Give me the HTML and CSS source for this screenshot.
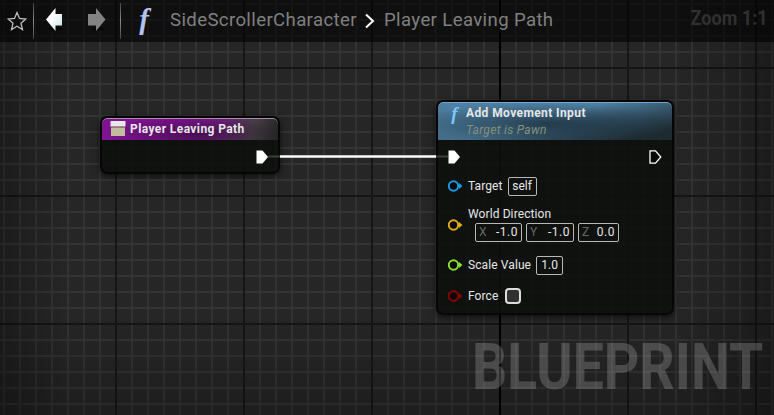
FILE: index.html
```
<!DOCTYPE html>
<html lang="en">
<head>
<meta charset="utf-8">
<title>Player Leaving Path</title>
<link rel="stylesheet" href="styles.css">
</head>
<body>
<main class="graph">
  <header class="bar">
    <svg class="star" width="20" height="20" viewBox="0 0 20 20"><path d="M10 1.5 12.5 7.4 18.8 8 14 12.2 15.5 18.6 10 15.3 4.5 18.6 6 12.2 1.2 8 7.5 7.4Z"/></svg>
    <i class="rule"></i>
    <svg class="arrow back" width="18" height="26" viewBox="0 0 18 26"><ellipse cx="10" cy="21" rx="7" ry="1.6" fill="#060606"/><path d="M0 11.500 9.500 0V6H16V17.500H9.500V23Z" fill="url(#ice)"/><defs><linearGradient id="ice" x2="1" y2="1"><stop offset=".4" stop-color="#fff"/><stop offset="1" stop-color="#c3e3e2"/></linearGradient></defs></svg>
    <svg class="arrow next" width="18" height="26" viewBox="0 0 18 26"><ellipse cx="10" cy="21" rx="7" ry="1.600" fill="#090909"/><path d="M17.500 11.500 8 0V6H0V17.500H8V23Z" fill="#838383"/></svg>
    <i class="rule"></i>
    <span class="fn">f</span>
    <nav class="crumbs"><span class="crumb first">SideScrollerCharacter</span><svg class="chev" width="10" height="16" viewBox="0 0 10 16"><path d="M1 1.500 8 8 1 14.500"/></svg><span class="crumb last">Player Leaving Path</span></nav>
    <span class="zoom">Zoom 1:1</span>
  </header>

  <div class="watermark">BLUEPRINT</div>

  <section class="node event">
    <div class="head"><svg width="16" height="16" viewBox="0 0 16 16"><path d="M.5 0H15.500V5.500H.5Z" fill="#e9e9e4"/><path d="M1 6H15V15H1Z" fill="#c3bb9e"/><path d="M1 6H15V7H1Z" fill="#8b8270"/></svg><b class="title">Player Leaving Path</b></div>
    <svg class="exec" width="13" height="14" viewBox="0 0 13 14"><path d="M.5 .5H6.500L12 7 6.500 13.500H.5Z"/></svg>
  </section>

  <section class="node call">
    <div class="head"><span class="fn">f</span><div><b class="title">Add Movement Input</b><i class="sub">Target is Pawn</i></div></div>
    <div class="execs">
      <svg class="exec" width="13" height="14" viewBox="0 0 13 14"><path d="M.5 .5H6.500L12 7 6.500 13.500H.5Z"/></svg>
      <svg class="exec open" width="13" height="14" viewBox="0 0 13 14"><path d="M1 .8H6.500L11.800 7 6.500 13.200H1Z"/></svg>
    </div>
    <div class="pin target"><svg width="16" height="12" viewBox="0 0 16 12"><circle cx="5.500" cy="6" r="4.700"/><path d="M11 3 14.500 6 11 9Z"/></svg><span class="label">Target</span><span class="field">self</span></div>
    <div class="pin world"><svg width="16" height="12" viewBox="0 0 16 12"><circle cx="5.500" cy="6" r="4.700"/><path d="M11 3 14.500 6 11 9Z"/></svg><div class="stack"><span class="label">World Direction</span><div class="axes"><span class="field x"><em>X</em>-1.0</span><span class="field y"><em>Y</em>-1.0</span><span class="field z"><em>Z</em>0.0</span></div></div></div>
    <div class="pin scale"><svg width="16" height="12" viewBox="0 0 16 12"><circle cx="5.500" cy="6" r="4.700"/><path d="M11 3 14.500 6 11 9Z"/></svg><span class="label">Scale Value</span><span class="field">1.0</span></div>
    <div class="pin force"><svg width="16" height="12" viewBox="0 0 16 12"><circle cx="5.500" cy="6" r="4.700"/><path d="M11 3 14.500 6 11 9Z"/></svg><span class="label">Force</span><span class="check"></span></div>
  </section>
  <svg class="wire" width="184" height="5" viewBox="0 0 184 5"><path d="M1 2.500H13M169 2.500H181" stroke="#3c3e3c" stroke-width="2"/><path d="M13 2.500H169" stroke="#fff" stroke-width="2.600"/></svg>
</main>
</body>
</html>
```
FILE: styles.css
```
* { box-sizing: border-box; }
body { margin: 0; font-family: Roboto, sans-serif; }
.graph {
  position: relative; width: 774px; height: 415px; overflow: hidden;
  background:
    linear-gradient(90deg, rgba(0,0,0,.28), transparent 70px calc(100% - 100px), rgba(0,0,0,.28)),
    linear-gradient(transparent 310px, rgba(0,0,0,.22)),
    linear-gradient(#000, #000) 499px 0 / 2px 100% no-repeat,
    repeating-linear-gradient(90deg, #161616 0 2px, transparent 2px 128px) -13px 0 / 900px 100%,
    repeating-linear-gradient(#161616 0 2px, transparent 2px 128px) 0 -61px / 100% 600px,
    repeating-linear-gradient(90deg, #333 0 2px, transparent 2px 16px) -13px 0 / 900px 100%,
    repeating-linear-gradient(#333 0 2px, transparent 2px 16px) 0 -13px / 100% 600px,
    #262626;
}
.bar { position: relative; height: 42px; display: flex; align-items: flex-start; background: rgba(0,0,0,.6); }
.star { margin: 11px 0 0 7px; flex: none; }
.star path { fill: none; stroke: #bdbdbd; stroke-width: 1.3; }
.rule { width: 1px; height: 36px; margin-top: 3px; background: linear-gradient(#444, #8c8c8c 50%, #444); }
.star + .rule { margin-left: 6px; }
.arrow { margin-top: 8px; flex: none; }
.back { margin-left: 12px; }
.next { margin: 8px 14px 0 24px; }
.fn { font: italic bold 29px/30px "Liberation Serif", serif; }
.bar .fn { width: 22px; margin: 4px 0 0 12px; color: #b4c3ef; text-align: center; }
.crumbs { display: flex; margin: 9px 0 0 15px; color: #808080; font-size: 18.6px; line-height: 22px; white-space: nowrap; }
.first { width: 188px; letter-spacing: .37px; }
.last { letter-spacing: .37px; }
.chev { margin: 4px 9px 0 7px; }
.chev path { fill: none; stroke: #fff; stroke-width: 2; }
.zoom { margin: 6px 6px 0 auto; font-weight: bold; font-size: 21px; line-height: 24px; color: #303030; transform: scaleX(.86); transform-origin: right; white-space: nowrap; }
.watermark { position: absolute; left: 472px; top: 329px; font-weight: bold; font-size: 65px; line-height: 76px; color: rgba(255,255,255,.19); transform: scaleX(.85); transform-origin: left; }
.node { position: absolute; border: 2px solid #050605; border-radius: 7px; background: rgba(13,15,12,.9); box-shadow: 0 2px 6px rgba(0,0,0,.65); overflow: hidden; color: #e6e6e6; }
.head { display: flex; }
.title { display: block; font-size: 12px; line-height: 14px; letter-spacing: .4px; white-space: nowrap; }
.event { left: 100px; top: 116px; width: 180px; height: 58px; }
.event .head { height: 22px; padding: 4px 0 0 8px; gap: 4px; border-radius: 5px 5px 0 0; box-shadow: inset 0 1px #a98bb0; background: radial-gradient(ellipse 95px 18px at 55% 70%, rgba(25,8,30,.55), transparent), linear-gradient(100deg, #7f1391 0 50%, #70237e 68%, #484148 85%, #232523 100%); }
.event .head svg { margin-top: -1px; }
.event .exec { display: block; margin: 10px 0 0 154px; }
.exec path { fill: #fff; }
.open path { fill: #090909; stroke: #fff; stroke-width: 1.3; }
.call { left: 436px; top: 100px; width: 238px; height: 215px; }
.call .head { height: 38px; border-radius: 5px 5px 0 0; box-shadow: inset 0 1px #71a7ce; background: radial-gradient(ellipse 130px 20px at 46% 55%, rgba(14,28,38,.6), transparent), linear-gradient(165deg, transparent 45%, rgba(22,30,33,.85) 90%), linear-gradient(#4f81a3, #426b88); padding: 4px 0 0 10px; }
.call .fn { width: 14px; margin: -3px 4px 0 0; font-size: 19px; line-height: 22px; text-align: center; color: #7ac7ff; text-indent: -1px; }
.sub { display: block; margin-top: 3px; color: #879078; font-size: 12px; line-height: 14px; letter-spacing: .3px; }
.execs { display: flex; justify-content: space-between; margin: 10px 10px 0; }
.pin { display: flex; align-items: center; margin-left: 10px; font-size: 12px; line-height: 14px; }
.pin > svg { flex: none; margin-right: 4px; }
.pin circle { fill: #090909; stroke: currentColor; stroke-width: 2; }
.pin path { fill: currentColor; }
.label, .field { color: #e6e6e6; white-space: nowrap; }
.field { height: 19px; border: 1px solid #b8b8b8; border-radius: 2px; line-height: 17px; text-align: center; }
.target { color: #159ce4; height: 20px; margin-top: 12px; }
.target .field { width: 29px; margin-left: 5px; }
.world { color: #e0aa1d; height: 36px; margin-top: 10px; align-items: flex-start; }
.world > svg { margin-top: 13px; }
.label { letter-spacing: .1px; }
.stack .label { display: block; margin-top: 1px; }
.axes { display: flex; margin: 2px 0 0 7px; gap: 4px; }
.axes .field { display: flex; justify-content: space-between; padding: 0 3px; width: 47px; letter-spacing: .5px; }
.axes .y { width: 48px; }
.axes .z { width: 41px; }
.axes em { font-style: normal; color: #666; }
.scale { color: #85df2d; height: 20px; margin-top: 13px; }
.scale .field { width: 27px; margin-left: 5px; }
.force { color: #8a0000; height: 20px; margin-top: 11px; }
.check { width: 16px; height: 16px; margin-left: 7px; border: 2px solid #dcdcdc; border-radius: 4px; background: #303030; }
.wire { position: absolute; left: 267px; top: 154px; }
```
